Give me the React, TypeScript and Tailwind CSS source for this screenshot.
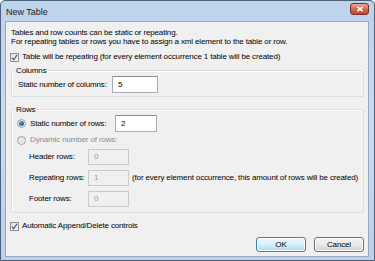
import React from 'react';

function Check() {
  return (
    <span className="w-[9px] h-[9px] border border-[#8e8f8f] bg-gradient-to-br from-[#dedede] to-white flex items-center justify-center shrink-0">
      <svg width="7" height="7" viewBox="0 0 7 7">
        <path d="M1 3.8 L2.8 5.8 L6 0.8" fill="none" stroke="#4a5f97" strokeWidth="1.3" />
      </svg>
    </span>
  );
}

function Radio({ on }: { on: boolean }) {
  return (
    <span className="w-[9px] h-[9px] rounded-full border border-[#a0a0a0] bg-gradient-to-br from-[#d6d6d6] to-white flex items-center justify-center shrink-0">
      {on ? (
        <span className="w-[5px] h-[5px] rounded-full bg-gradient-to-br from-[#4fb3e8] to-[#0d4f8a]" />
      ) : (
        <span className="w-[5px] h-[5px] rounded-full bg-[#e8e8e8]" />
      )}
    </span>
  );
}

function Field({ value, w, h, disabled }: { value: string; w: string; h: string; disabled?: boolean }) {
  return (
    <div
      className={`${w} ${h} shrink-0 border flex items-center pl-[5px] ${
        disabled
          ? 'border-[#cacaca] bg-[#f0f0f0] text-[#9a9a9a]'
          : 'border-[#abadb3] border-t-[#8a8c91] bg-white text-black'
      }`}
    >
      {value}
    </div>
  );
}

function Group({ label, children, className }: { label: string; children: React.ReactNode; className?: string }) {
  return (
    <div className={`relative border border-[#d5dfe5] shadow-[inset_1px_1px_0_#fff] rounded-[2px] ${className ?? ''}`}>
      <span className="absolute -top-[5px] left-[3px] px-[1px] bg-[#f0f0f0] leading-[9px]">{label}</span>
      {children}
    </div>
  );
}

export default function App() {
  return (
    <div
      className="w-[375px] h-[261px] bg-gradient-to-b from-[#bdd3ec] via-[#c9dcf0] to-[#b9d1ea] border border-[#4f6178] rounded-t-[5px] flex flex-col text-[8px] tracking-[-0.15px] text-black overflow-hidden whitespace-nowrap"
      style={{ fontFamily: '"Liberation Sans", Arial, sans-serif' }}
    >
      {/* Title bar */}
      <div className="h-[20px] shrink-0 flex items-start justify-between pl-[5px] pr-[5px]">
        <span className="mt-[5px] text-[9px] tracking-normal text-[#1a1a1a]">New Table</span>
        <div className="mt-[2px] w-[19px] h-[12px] rounded-[3px] border border-[#7a3226] bg-gradient-to-b from-[#eba898] via-[#cf6a52] to-[#c1442c] flex items-center justify-center">
          <svg width="8" height="6" viewBox="0 0 8 6">
            <path d="M1.3 0.8 L6.7 5.2 M6.7 0.8 L1.3 5.2" stroke="white" strokeWidth="1.6" />
          </svg>
        </div>
      </div>

      {/* Client area */}
      <div className="h-[236px] shrink-0 ml-[4px] mr-[5px] bg-[#f0f0f0] border border-[#95a9c0] flex flex-col pt-[6px] pl-[4px] pr-[4px]">
        <div className="leading-[9px] pl-[1px]">
          <div>Tables and row counts can be static or repeating.</div>
          <div>For repeating tables or rows you have to assign a xml element to the table or row.</div>
        </div>

        <div className="h-[10px] flex items-center gap-[3px] mt-[6px]">
          <Check />
          <span>Table will be repeating (for every element occurrence 1 table will be created)</span>
        </div>

        <Group label="Columns" className="mt-[8px] ml-[1px] h-[27px] flex items-start pl-[6px] pt-[5px]">
          <span className="w-[94px] h-[17px] flex items-center">Static number of columns:</span>
          <Field value="5" w="w-[46px]" h="h-[17px]" />
        </Group>

        <Group label="Rows" className="mt-[12px] ml-[1px] h-[104px] flex flex-col pl-[5px] pt-[5px]">
          <div className="flex items-center gap-[4px]">
            <Radio on />
            <span className="w-[81px]">Static number of rows:</span>
            <Field value="2" w="w-[42px]" h="h-[17px]" />
          </div>
          <div className="h-[10px] flex items-center gap-[4px] mt-[3px] text-[#8d8d8d]">
            <Radio on={false} />
            <span>Dynamic number of rows:</span>
          </div>
          <div className="flex flex-col gap-[5px] mt-[4px] pl-[12px]">
            <div className="flex items-center">
              <span className="w-[59px]">Header rows:</span>
              <Field value="0" w="w-[41px]" h="h-[16px]" disabled />
            </div>
            <div className="flex items-center">
              <span className="w-[59px]">Repeating rows:</span>
              <Field value="1" w="w-[41px]" h="h-[16px]" disabled />
              <span className="ml-[3px]">(for every element occurrence, this amount of rows will be created)</span>
            </div>
            <div className="flex items-center">
              <span className="w-[59px]">Footer rows:</span>
              <Field value="0" w="w-[41px]" h="h-[16px]" disabled />
            </div>
          </div>
        </Group>

        <div className="h-[10px] flex items-center gap-[3px] mt-[8px]">
          <Check />
          <span>Automatic Append/Delete controls</span>
        </div>

        <div className="flex justify-end gap-[8px] mt-[6px]">
          <button className="w-[50px] h-[15px] rounded-[3px] border border-[#3c7fb1] bg-gradient-to-b from-[#eaf6fd] via-[#d9f0fc] to-[#a7d9f5] shadow-[inset_0_0_0_1px_#fff] text-[8px]">
            OK
          </button>
          <button className="w-[50px] h-[15px] rounded-[3px] border border-[#707070] bg-gradient-to-b from-[#f2f2f2] via-[#ebebeb] to-[#cfcfcf] shadow-[inset_0_0_0_1px_#fcfcfc] text-[8px]">
            Cancel
          </button>
        </div>
      </div>
    </div>
  );
}
